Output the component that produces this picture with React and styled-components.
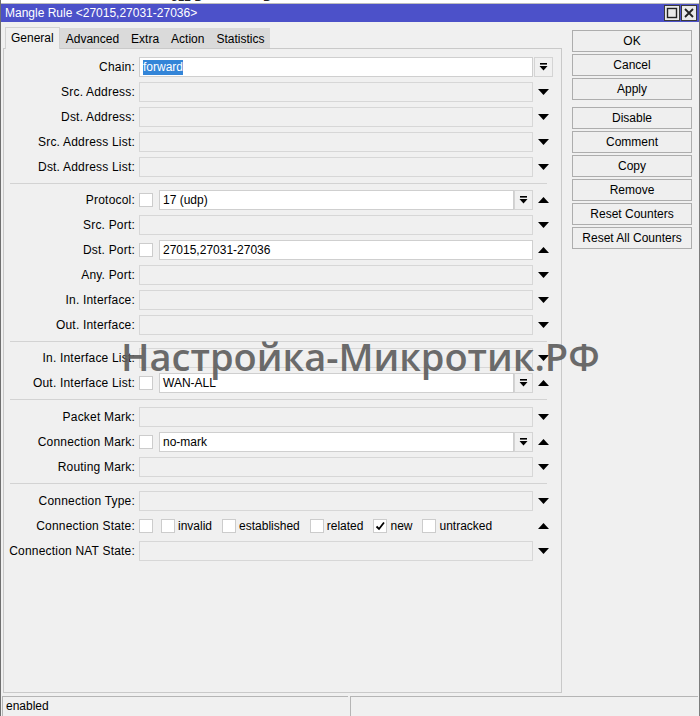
import React from 'react';
import styled, { createGlobalStyle } from 'styled-components';

const GlobalStyle = createGlobalStyle`
  html, body {
    margin: 0;
    padding: 0;
    background: #ffffff;
  }
  body {
    font-family: 'Liberation Sans', Arial, sans-serif;
    font-size: 12px;
    color: #000;
  }
`;

const DropIcon = () => (
  <svg width='9' height='8' viewBox='0 0 9 8'>
    <rect x='1' y='0' width='7' height='1.6' fill='#000' />
    <polygon points='0.5,3 8.5,3 4.5,7.5' fill='#000' />
  </svg>
);

const Arrow = ({ up }) => (
  <svg width='11' height='6' viewBox='0 0 11 6'>
    <polygon points={up ? '0,6 11,6 5.5,0' : '0,0 11,0 5.5,6'} fill='#000' />
  </svg>
);

const Row = ({ label, children, trailer }) => (
  <RowWrap>
    <Label>{label}</Label>
    <Field>{children}</Field>
    <Trailer>{trailer}</Trailer>
  </RowWrap>
);

const Empty = ({ label, up }) => (
  <Row label={label} trailer={<Arrow up={up} />}>
    <TextBox />
  </Row>
);

const Picked = ({ label, value }) => (
  <Row label={label} trailer={<Arrow up />}>
    <Check />
    <Gap />
    <TextBox $active>{value}</TextBox>
    <DropBtn>
      <DropIcon />
    </DropBtn>
  </Row>
);

const StateOpt = ({ children, on }) => (
  <Opt $bare={!children}>
    <Check>
      {on && (
        <svg width='12' height='12' viewBox='0 0 12 12'>
          <path d='M2.5 6.5 L5 9 L10 2.5' stroke='#000' strokeWidth='1.8' fill='none' />
        </svg>
      )}
    </Check>
    {children && <span>{children}</span>}
  </Opt>
);

const App = () => {
  return (
    <>
      <GlobalStyle />
      <Window>
        <TopStrip>
          <span style={{ left: 170 }}>312 B</span>
          <span style={{ left: 262 }}>B</span>
        </TopStrip>
        <TitleBar>
          <span>Mangle Rule &lt;27015,27031-27036&gt;</span>
          <WinButtons>
            <WinBtn>
              <svg width='12' height='12' viewBox='0 0 12 12'>
                <rect x='1.5' y='1.5' width='9' height='9' stroke='#222' strokeWidth='1.4' fill='none' />
              </svg>
            </WinBtn>
            <WinBtn>
              <svg width='12' height='12' viewBox='0 0 12 12'>
                <path d='M2 2 L10 10 M10 2 L2 10' stroke='#222' strokeWidth='1.8' />
              </svg>
            </WinBtn>
          </WinButtons>
        </TitleBar>

        <Body>
          <Main>
            <TabBar>
              <Tab $active>General</Tab>
              <Tab>Advanced</Tab>
              <Tab>Extra</Tab>
              <Tab>Action</Tab>
              <Tab>Statistics</Tab>
            </TabBar>
            <Panel>
              <Section>
                <Row
                  label='Chain:'
                  trailer={
                    <DropBtn>
                      <DropIcon />
                    </DropBtn>
                  }
                >
                  <TextBox $active>
                    <Selected>forward</Selected>
                  </TextBox>
                </Row>
                <Empty label='Src. Address:' />
                <Empty label='Dst. Address:' />
                <Empty label='Src. Address List:' />
                <Empty label='Dst. Address List:' />
              </Section>
              <Divider />
              <Section>
                <Picked label='Protocol:' value='17 (udp)' />
                <Empty label='Src. Port:' />
                <Row label='Dst. Port:' trailer={<Arrow up />}>
                  <Check />
                  <Gap />
                  <TextBox $active>27015,27031-27036</TextBox>
                </Row>
                <Empty label='Any. Port:' />
                <Empty label='In. Interface:' />
                <Empty label='Out. Interface:' />
              </Section>
              <Divider />
              <Section>
                <Empty label='In. Interface List:' />
                <Picked label='Out. Interface List:' value='WAN-ALL' />
              </Section>
              <Divider $tall />
              <Section>
                <Empty label='Packet Mark:' />
                <Picked label='Connection Mark:' value='no-mark' />
                <Empty label='Routing Mark:' />
              </Section>
              <Divider $tall />
              <Section>
                <Empty label='Connection Type:' />
                <Row label='Connection State:' trailer={<Arrow up />}>
                  <States>
                    <StateOpt />
                    <StateOpt>invalid</StateOpt>
                    <StateOpt>established</StateOpt>
                    <StateOpt>related</StateOpt>
                    <StateOpt on>new</StateOpt>
                    <StateOpt>untracked</StateOpt>
                  </States>
                </Row>
                <Empty label='Connection NAT State:' />
              </Section>
            </Panel>
          </Main>

          <Side>
            <Button>OK</Button>
            <Button>Cancel</Button>
            <Button>Apply</Button>
            <Spacer />
            <Button>Disable</Button>
            <Button>Comment</Button>
            <Button>Copy</Button>
            <Button>Remove</Button>
            <Button>Reset Counters</Button>
            <Button>Reset All Counters</Button>
          </Side>
        </Body>

        <StatusBar>
          <StatusCell $w='346px'>enabled</StatusCell>
          <StatusCell />
        </StatusBar>

        <Watermark>Настройка-Микротик.РФ</Watermark>
      </Window>
    </>
  );
};

const Window = styled.div`
  position: relative;
  width: 700px;
  height: 716px;
  box-sizing: border-box;
  display: flex;
  flex-direction: column;
  background: #f0f0f0;
  border-left: 1px solid #6f6f6f;
  border-right: 1px solid #7c7c7c;
  overflow: hidden;
`;

const TopStrip = styled.div`
  position: relative;
  height: 3px;
  background: #ffffff;
  border-bottom: 1px solid #bdbdbd;
  overflow: hidden;

  span {
    position: absolute;
    top: -10px;
    font-size: 12px;
    color: #222;
  }
`;

const TitleBar = styled.div`
  height: 18px;
  display: flex;
  align-items: center;
  justify-content: space-between;
  padding: 0 2px 0 4px;
  background: #4c51c9;
  color: #ffffff;
  font-size: 12px;
`;

const WinButtons = styled.div`
  display: flex;
  gap: 1px;
`;

const WinBtn = styled.div`
  width: 14px;
  height: 14px;
  display: flex;
  align-items: center;
  justify-content: center;
  background: #e9e9e9;
  border: 1px solid #3a3a3a;
`;

const Body = styled.div`
  flex: 1;
  display: flex;
  min-height: 0;
`;

const Main = styled.div`
  width: 561px;
  display: flex;
  flex-direction: column;
`;

const TabBar = styled.div`
  height: 26px;
  display: flex;
  align-items: flex-end;
  padding-left: 4px;
  box-sizing: border-box;
`;

const Tab = styled.div`
  height: ${(p) => (p.$active ? '22px' : '20px')};
  display: flex;
  align-items: center;
  padding: 0 5px;
  box-sizing: border-box;
  background: ${(p) => (p.$active ? '#f0f0f0' : '#dadada')};
  border: 1px solid ${(p) => (p.$active ? '#d2d2d2' : '#dadada')};
  border-bottom: none;
  margin-bottom: ${(p) => (p.$active ? '-1px' : '0')};
  position: relative;
  font-size: 12px;
  padding-bottom: ${(p) => (p.$active ? '2px' : '0')};
`;

const Panel = styled.div`
  flex: 1;
  margin: 0 0 1px 2px;
  border: 1px solid #c9c9c9;
  padding: 8px 7px 0 0;
`;

const Section = styled.div`
  display: flex;
  flex-direction: column;
  gap: 5px;
`;

const Divider = styled.div`
  height: 1px;
  margin: ${(p) => (p.$tall ? '6px 7px 7px 6px' : '6px 7px 6px 6px')};
  background: #d3d3d3;
`;

const RowWrap = styled.div`
  height: 20px;
  display: flex;
  align-items: center;
`;

const Label = styled.div`
  width: 131px;
  padding-right: 4px;
  text-align: right;
  white-space: nowrap;
  letter-spacing: 0.2px;
`;

const Field = styled.div`
  width: 394px;
  height: 20px;
  display: flex;
  align-items: center;
`;

const Trailer = styled.div`
  width: 20px;
  height: 20px;
  display: flex;
  align-items: center;
  justify-content: flex-end;

  > svg {
    margin-right: 4px;
  }
`;

const TextBox = styled.div`
  flex: 1;
  height: 20px;
  box-sizing: border-box;
  display: flex;
  align-items: center;
  padding-left: 3px;
  background: ${(p) => (p.$active ? '#ffffff' : '#f0f0f0')};
  border: 1px solid ${(p) => (p.$active ? '#cfcfcf' : '#d7d7d7')};
  white-space: nowrap;
  font-size: 12px;
`;

const Selected = styled.span`
  background: #3385d8;
  color: #ffffff;
  line-height: 15px;
`;

const DropBtn = styled.div`
  width: 19px;
  height: 20px;
  box-sizing: border-box;
  display: flex;
  align-items: center;
  justify-content: center;
  border: 1px solid #d4d4d4;
  background: #f0f0f0;
`;

const Check = styled.div`
  width: 14px;
  height: 14px;
  flex: none;
  box-sizing: border-box;
  display: flex;
  align-items: center;
  justify-content: center;
  background: #ffffff;
  border: 1px solid #cccccc;
`;

const Gap = styled.div`
  width: 6px;
  flex: none;
`;

const States = styled.div`
  display: flex;
  align-items: center;
  gap: 10px;
`;

const Opt = styled.div`
  display: flex;
  align-items: center;
  gap: 3px;
  font-size: 12px;
  margin-right: ${(p) => (p.$bare ? '-2px' : '0')};
`;

const Side = styled.div`
  flex: 1;
  display: flex;
  flex-direction: column;
  gap: 2px;
  padding: 8px 7px 0 10px;
`;

const Button = styled.div`
  height: 22px;
  box-sizing: border-box;
  display: flex;
  align-items: center;
  justify-content: center;
  background: #efefef;
  border: 1px solid #adadad;
  font-size: 12px;
`;

const Spacer = styled.div`
  height: 3px;
`;

const StatusBar = styled.div`
  height: 22px;
  display: flex;
  gap: 2px;
  padding: 2px 1px 0;
  box-sizing: border-box;
`;

const StatusCell = styled.div`
  width: ${(p) => p.$w || 'auto'};
  flex: ${(p) => (p.$w ? 'none' : '1')};
  box-sizing: border-box;
  border-top: 1px solid #b5b5b5;
  border-left: 1px solid #b5b5b5;
  padding: 2px 0 0 3px;
  font-size: 12px;
`;

const Watermark = styled.div`
  position: absolute;
  left: 120px;
  top: 330px;
  font-family: 'Open Sans', 'Noto Sans', sans-serif;
  font-size: 38px;
  font-weight: 600;
  color: #5c5c5c;
  opacity: 0.9;
  white-space: nowrap;
  pointer-events: none;
`;

export default App;
